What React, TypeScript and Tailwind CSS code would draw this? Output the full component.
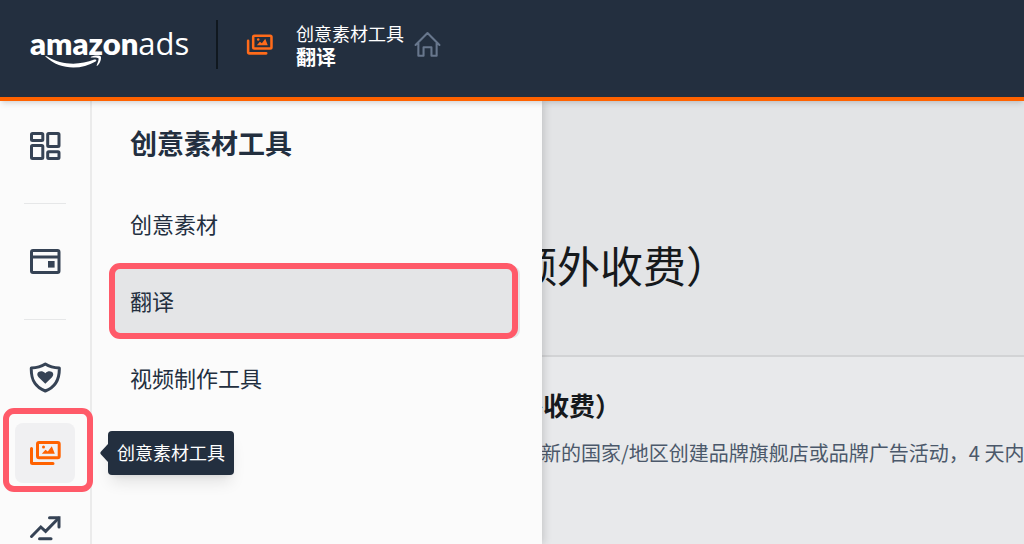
import React, { useState } from "react";

type IIconProps = {
  className?: string;
};

function DashboardIcon({ className }: IIconProps) {
  return (
    <svg viewBox="0 0 32 32" fill="none" stroke="currentColor" strokeWidth="3" className={className}>
      <rect x="2.5" y="3.5" width="11.3" height="7" rx="1" />
      <rect x="2.5" y="15.5" width="11.3" height="13" rx="1" />
      <rect x="18.7" y="3.5" width="11.3" height="13" rx="1" />
      <rect x="18.7" y="21.7" width="11.3" height="6.8" rx="1" />
    </svg>
  );
}

function BillingIcon({ className }: IIconProps) {
  return (
    <svg viewBox="0 0 32 32" fill="none" stroke="currentColor" strokeWidth="3" className={className}>
      <rect x="2.5" y="4.5" width="27.5" height="22" rx="1.5" />
      <path d="M2.5 11h27.5" />
      <rect x="19" y="15" width="6.6" height="6.6" fill="currentColor" stroke="none" />
    </svg>
  );
}

function ShieldHeartIcon({ className }: IIconProps) {
  return (
    <svg viewBox="0 0 32 32" fill="none" className={className}>
      <path
        d="M16.3 2 C12.5 4.4 7.5 5.8 2.3 6 C2 16 4.5 24.5 16.3 29 C28 24.5 30.6 16 30.3 6 C25 5.8 20 4.4 16.3 2Z"
        stroke="currentColor"
        strokeWidth="3"
        strokeLinejoin="round"
      />
      <path
        d="M16.3 21.8 L9.6 15.2 C5.6 10.8 12 6.6 16.3 11.3 C20.6 6.6 27 10.8 23 15.2Z"
        fill="currentColor"
      />
    </svg>
  );
}

function CreativeIcon({ className }: IIconProps) {
  return (
    <svg viewBox="0 0 32 32" fill="none" stroke="currentColor" strokeWidth="3" className={className}>
      <rect x="8.5" y="5.5" width="21.7" height="15.3" rx="1.5" />
      <path d="M2.5 11.5 V25.5 a1 1 0 0 0 1 1 H24" strokeLinecap="round" />
      <g fill="currentColor" stroke="none">
        <circle cx="14.5" cy="10" r="1.5" />
        <path d="M12.8 16.8 L16.5 12.8 L18.8 14.6 L22.8 9.3 L25.8 16.8Z" />
      </g>
    </svg>
  );
}

function TrendIcon({ className }: IIconProps) {
  return (
    <svg viewBox="0 0 32 32" fill="none" stroke="currentColor" strokeWidth="3" className={className}>
      <path d="M2.5 24.5 L11.8 15 L16.6 19.4 L29.5 6.2" strokeLinecap="round" />
      <path d="M20.5 5.8 H30 V15" strokeLinecap="round" />
      <path d="M10.5 26.8 H22" strokeLinecap="round" />
    </svg>
  );
}

function HomeIcon({ className }: IIconProps) {
  return (
    <svg viewBox="0 0 26 26" fill="none" stroke="currentColor" strokeWidth="2" className={className}>
      <path
        d="M1.5 13.4 L13 2 L24.5 13.4 M4.2 11.5 V23.8 H9.2 V15.6 H16.8 V23.8 H21.8 V11.5"
        strokeLinecap="round"
        strokeLinejoin="round"
      />
    </svg>
  );
}

function Logo() {
  return (
    <a href="#" aria-label="amazonads" className="relative block h-12 w-[158px] shrink-0 text-white">
      <span className="flex items-baseline leading-[44px] whitespace-nowrap">
        <span className="font-['Lato',sans-serif] text-[31px] font-extrabold">amazon</span>
        <span className="font-['Open_Sans','Noto_Sans',sans-serif] text-[31px]">ads</span>
      </span>
      <svg viewBox="0 0 58 14" fill="currentColor" className="absolute left-[15px] top-[34px] w-[58px]">
        <path d="M0.6 1.8 C0 0.8 1.4 0.9 2.2 1.6 C17 10.4 34 10.6 49.4 4.6 C51.4 4 52 5.4 50.6 6.4 C36 15.2 15 15.2 0.6 1.8Z" />
        <path d="M46 1.8 C49 0.2 54.6 -0.2 55.8 1.4 C56.6 4 55 8.4 52.6 10.6 C51.8 11.2 51.4 10.8 51.8 10 C53 7.4 54 4.2 53.4 3.2 C52.4 2.2 49 2.4 46.8 2.6 C45.6 2.7 45.4 2.2 46 1.8Z" />
      </svg>
    </a>
  );
}

const navItems = [
  { id: "dashboard", label: "控制面板", icon: DashboardIcon, divider: true },
  { id: "billing", label: "账单", icon: BillingIcon, divider: true },
  { id: "brand", label: "品牌", icon: ShieldHeartIcon, divider: false },
  { id: "creative", label: "创意素材工具", icon: CreativeIcon, divider: false },
  { id: "report", label: "报告", icon: TrendIcon, divider: false },
];

const menuItems = ["创意素材", "翻译", "视频制作工具"];

function SideNav() {
  const [active, setActive] = useState("creative");

  return (
    <nav className="relative z-20 w-[92px] shrink-0 border-r-2 border-[#ebebeb] bg-[#fbfbfb] px-[15px] pt-[15px]">
      <ul className="flex flex-col gap-[15px]">
        {navItems.map(({ id, label, icon: Icon, divider }) => (
          <li key={id} className="relative">
            <button
              aria-label={label}
              onClick={() => setActive(id)}
              className={`flex size-[60px] items-center justify-center rounded-lg ${
                active === id ? "bg-[#f0f0f2] text-[#ff6200]" : "text-[#364355]"
              }`}
            >
              <Icon className="size-8" />
            </button>
            {divider && <hr className="mx-[9px] mt-[27px] mb-[13px] border-[#e6e7e8]" />}
            {active === id && (
              <>
                <span className="pointer-events-none absolute -top-[15px] -right-[18px] -bottom-[9px] -left-3 rounded-[11px] border-[6px] border-[#ff5a69]" />
                <span
                  role="tooltip"
                  className="absolute top-2 left-[93px] rounded bg-[#232f3f] px-[9px] pb-0.5 text-lg leading-[42px] whitespace-nowrap text-white shadow-lg"
                >
                  <svg viewBox="0 0 8 18" className="absolute top-[13px] -left-2 h-[18px] w-2" fill="#232f3f">
                    <path d="M8 0 L0.6 8 Q0 9 0.6 10 L8 18Z" />
                  </svg>
                  {label}
                </span>
              </>
            )}
          </li>
        ))}
      </ul>
    </nav>
  );
}

function ToolDrawer() {
  const [selected, setSelected] = useState("翻译");

  return (
    <aside className="absolute inset-y-0 left-[92px] z-10 w-[450px] bg-[#fbfbfb] pt-6 pr-[22px] pl-[18px] text-[#232f3f] shadow-[2px_0_8px_rgba(0,0,0,0.15)]">
      <h2 className="px-5 text-[27px] leading-9 font-bold">创意素材工具</h2>
      <ul className="mt-7 flex flex-col gap-[5px]">
        {menuItems.map((item) => (
          <li key={item} className="relative">
            <a
              href="#"
              onClick={() => setSelected(item)}
              className={`block rounded-lg px-5 pb-1 text-[22px] leading-[68px] ${
                selected === item ? "bg-[#e4e5e7]" : ""
              }`}
            >
              {item}
            </a>
            {selected === item && (
              <span className="pointer-events-none absolute -top-[3px] right-0.5 -bottom-px -left-px rounded-[11px] border-[6px] border-[#ff5a69]" />
            )}
          </li>
        ))}
      </ul>
    </aside>
  );
}

function App() {
  return (
    <div className="flex h-screen flex-col overflow-hidden bg-[#e8e9eb] font-['Noto_Sans_CJK_SC',sans-serif]">
      <header className="relative z-30 flex shrink-0 items-center border-b-4 border-[#ff6200] bg-[#232f3f] pt-5 pb-7 pl-[30px] text-white shadow-md">
        <Logo />
        <div className="ml-7 h-[49px] w-0.5 bg-[#10181f]" />
        <CreativeIcon className="ml-7 size-[27px] text-[#ff6b1a]" />
        <div className="ml-[23px]">
          <p className="text-lg leading-6">创意素材工具</p>
          <p className="text-xl leading-6 font-bold">翻译</p>
        </div>
        <a href="#" aria-label="主页" className="ml-2.5 text-[#68778d]">
          <HomeIcon className="size-[27px]" />
        </a>
      </header>

      <div className="relative flex min-h-0 flex-1">
        <SideNav />
        <ToolDrawer />
        <main className="min-w-0 flex-1 overflow-hidden whitespace-nowrap text-[#16191c]">
          <div className="border-b-2 border-[#d2d3d5] bg-[#e3e4e6] pt-[131px] pb-[59px] pl-[422px]">
            <h1 className="text-[43px] leading-[64px]">额外收费）</h1>
          </div>
          <section className="pt-7 pl-[425px]">
            <h2 className="text-[26px] leading-10 font-bold">外收费）</h2>
            <p className="mt-3 pl-1 text-xl leading-8 text-[#4b586a]">
              在新的国家/地区创建品牌旗舰店或品牌广告活动，4 天内交付
            </p>
          </section>
        </main>
      </div>
    </div>
  );
}

export default App;
